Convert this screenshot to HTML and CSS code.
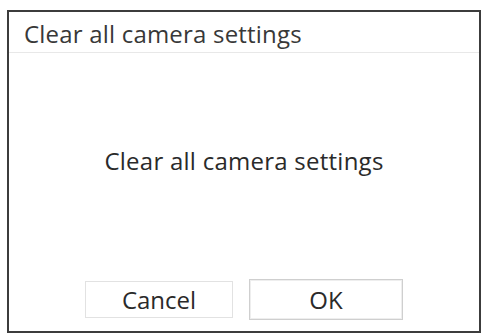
FILE: index.html
```html
<!DOCTYPE html>
<html>
<head>
<meta charset="utf-8">
<link rel="stylesheet" href="styles.css">
</head>
<body>
<div class="dialog">
  <div class="title">Clear all camera settings</div>
  <div class="message">Clear all camera settings</div>
  <div class="actions">
    <button class="btn btn-cancel">Cancel</button>
    <button class="btn btn-ok">OK</button>
  </div>
</div>
</body>
</html>
```
FILE: styles.css
```css
html, body {
  margin: 0;
  padding: 0;
  background: #ffffff;
}
body {
  font-family: "Open Sans", "Noto Sans", sans-serif;
  color: #2e2e2e;
}
.dialog {
  box-sizing: border-box;
  width: 474px;
  height: 323px;
  margin: 10px 0 0 7px;
  border: 2px solid #3c3c3c;
  display: flex;
  flex-direction: column;
  background: #ffffff;
}
.title {
  box-sizing: border-box;
  height: 41px;
  border-bottom: 1px solid #e8e8e8;
  padding: 3px 0 0 15px;
  display: flex;
  align-items: center;
  font-size: 24px;
  letter-spacing: 0.2px;
  color: #383838;
}
.message {
  flex: 1;
  display: flex;
  align-items: center;
  justify-content: center;
  padding-bottom: 12px;
  font-size: 24px;
  letter-spacing: 0.25px;
  color: #2a2a2a;
}
.actions {
  display: flex;
  justify-content: center;
  align-items: center;
  gap: 16px;
  padding-bottom: 11px;
}
.btn {
  box-sizing: border-box;
  font-family: "Open Sans", "Noto Sans", sans-serif;
  font-size: 24px;
  color: #2a2a2a;
  background: #ffffff;
  padding: 0;
}
.btn-cancel {
  width: 148px;
  height: 37px;
  border: 1px solid #e2e2e2;
}
.btn-ok {
  width: 154px;
  height: 41px;
  border: 1px solid #cfcfcf;
  box-shadow: inset 0 0 0 1px #eeeeee;
}
```
